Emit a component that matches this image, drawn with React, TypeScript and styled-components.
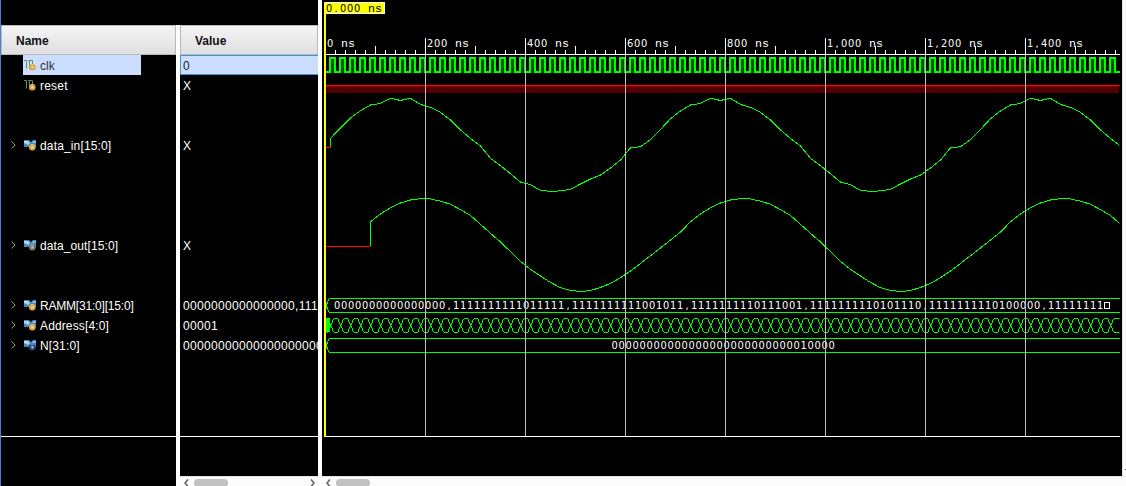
import React from 'react';
import styled, { createGlobalStyle } from 'styled-components';

const GlobalStyle = createGlobalStyle`
  * { box-sizing: border-box; }
  body { margin: 0; background: #000; overflow: hidden; }
`;

const Viewer = styled.div`
  display: flex;
  width: 1126px;
  height: 486px;
  overflow: hidden;
  background: #000;
  color: #fff;
  font-family: 'Liberation Sans', Arial, sans-serif;
  font-size: 12px;
`;

const Column = styled.section<{ $width: number; $edge?: boolean }>`
  display: flex;
  flex-direction: column;
  flex: none;
  width: ${p => p.$width}px;
  height: 486px;
  overflow: hidden;
  padding-top: 25px;
  border-left: ${p => (p.$edge ? '1px solid #4a80d8' : 'none')};
`;

const Splitter = styled.div<{ $top?: number }>`
  flex: none;
  width: 4px;
  margin-top: ${p => p.$top ?? 0}px;
  background: #fff;
`;

const Header = styled.div`
  flex: none;
  height: 30px;
  padding: 1px 14px 0;
  border: 1px solid #b9b9b9;
  background: linear-gradient(#f4f4f4, #dfdfe1);
  color: #111;
  font-weight: bold;
  line-height: 29px;
`;

const Rows = styled.div`
  flex: none;
  height: 382px;
  border-bottom: 1px solid #fff;
`;

const NameRow = styled.div<{ $height: number }>`
  display: flex;
  align-items: center;
  height: ${p => p.$height}px;
  padding-left: 8px;
`;

const Expander = styled.span`
  display: flex;
  width: 14px;
  svg { display: block; }
`;

const NameLabel = styled.span<{ $selected?: boolean; $spacing: number }>`
  display: flex;
  align-items: center;
  height: 20px;
  width: ${p => (p.$selected ? '118px' : 'auto')};
  padding: 0 0 0 1px;
  gap: 4px;
  white-space: nowrap;
  letter-spacing: ${p => p.$spacing}px;
  background: ${p => (p.$selected ? '#ccdeff' : 'transparent')};
  color: ${p => (p.$selected ? '#333' : '#fff')};
`;

const NameText = styled.span`
  padding-top: 2px;
`;

const ValueRow = styled.div<{ $height: number; $selected?: boolean }>`
  display: flex;
  align-items: center;
  height: ${p => p.$height}px;
  padding: 2px 0 0 ${p => (p.$selected ? 2 : 3)}px;
  overflow: hidden;
  white-space: nowrap;
  letter-spacing: 0.33px;
  border: ${p => (p.$selected ? '1px solid #3c96d2' : 'none')};
  border-right: none;
  background: ${p => (p.$selected ? '#ccdeff' : 'transparent')};
  color: ${p => (p.$selected ? '#222' : '#fff')};
`;

const Filler = styled.div`
  flex: 1;
`;

const ScrollBar = styled.div`
  display: flex;
  flex: none;
  height: 10px;
  padding: 2px 3px 0 4px;
  overflow: hidden;
  border-top: 1px solid #e3e3e3;
  background: #fbfbfb;
  svg { display: block; flex: none; }
`;

const Thumb = styled.div`
  flex: none;
  width: 34px;
  height: 8px;
  margin: 0 auto 0 5px;
  border-radius: 4px;
  background: #c1c1c1;
`;

const WaveArea = styled.section`
  display: flex;
  flex-direction: column;
  flex: none;
  width: 804px;
  height: 486px;
`;

const WaveBody = styled.div`
  display: flex;
  flex: none;
  height: 476px;
`;

const VerticalBar = styled.div`
  display: flex;
  align-items: flex-end;
  justify-content: flex-end;
  width: 4px;
  height: 476px;
  padding-bottom: 6px;
  border-left: 1px solid #e3e3e3;
  background: #fbfbfb;
`;

const ArrowTip = styled.i`
  width: 1px;
  height: 1px;
  background: #666;
`;

const Plot = styled.svg`
  display: block;
  flex: none;
  text { font-family: 'DejaVu Sans', sans-serif; font-size: 9.9px; fill: #fff; }
  text .unit { font-family: 'Liberation Mono', monospace; font-size: 11.67px; }
  .crisp { shape-rendering: crispEdges; fill: none; stroke-width: 1; }
`;

type Kind = 'wire' | 'gold' | 'gray' | 'navy';
interface Signal { name: string; value: string; height: number; kind: Kind; selected?: boolean; spacing?: number }

const signals: Signal[] = [
  { name: 'clk', value: '0', height: 20, kind: 'wire', selected: true },
  { name: 'reset', value: 'X', height: 20, kind: 'wire', spacing: 0.2 },
  { name: 'data_in[15:0]', value: 'X', height: 100, kind: 'gold', spacing: 0.15 },
  { name: 'data_out[15:0]', value: 'X', height: 100, kind: 'gray', spacing: 0.1 },
  { name: 'RAMM[31:0][15:0]', value: '0000000000000000,111', height: 20, kind: 'gold', spacing: -0.2 },
  { name: 'Address[4:0]', value: '00001', height: 20, kind: 'gold', spacing: 0.13 },
  { name: 'N[31:0]', value: '00000000000000000000', height: 20, kind: 'navy', spacing: 0.15 },
];

const badge = { wire: '#d9a43a', gold: '#dca63c', gray: '#777', navy: '#303c80' };

function SignalIcon({ kind }: { kind: Kind }) {
  return (
    <svg width="12" height="12" viewBox="0 0 12 12">
      {kind === 'wire' ? (
        <path d="M0 1.5H2.5V9.5M4 1.5H5.5V9.5H7M5.5 1.5H8.5V5" fill="none" stroke="#5d8f58" strokeWidth="1" />
      ) : (
        <>
          <path d="M0 1H5L7 3L9 1H12V8H8L6 7L5 8H0Z" fill="#4688bb" />
          <path d="M0 2H4L6 4L4 6L0 4Z" fill="#a8d9f5" />
          <path d="M9 2H12V4H8Z" fill="#83b8db" />
        </>
      )}
      <circle cx="8.3" cy="8.2" r="3.3" fill={badge[kind]} />
      <circle cx="8.5" cy="8.2" r="1.3" fill={kind === 'navy' ? '#b8bddd' : '#f2dfb4'} opacity={kind === 'gray' ? 0.6 : 0.9} />
      <path d="M6.3 6.2Q8 4.8 10 6" fill="none" stroke="#eee" strokeOpacity="0.45" />
    </svg>
  );
}

function Chevron({ left }: { left?: boolean }) {
  return (
    <svg width="5" height="8" viewBox="0 0 5 8">
      <path d={left ? 'M4 .5L1 4L4 7.5' : 'M1 .5L4 4L1 7.5'} fill="none" stroke="#666" strokeWidth="1.6" />
    </svg>
  );
}

function MonoText({ x, y, children, unit, fill }: { x: number; y: number; children: string; unit?: string; fill?: string }) {
  const all = children + (unit ? ' ' + unit : '');
  return (
    <text
      x={Array.from(all, (c, i) => x + i * 7 + (c === ',' || c === '.' ? 1.6 : 0)).join(' ')}
      y={y}
      style={fill ? { fill } : undefined}
    >
      {children}{unit && <tspan className="unit">{' ' + unit}</tspan>}
    </text>
  );
}

// One full period of each sampled signal, one sample every 10 px.
const inStart = [138, 127.5, 117.5, 110.3, 104.6];
const inPeriod = [103, 98, 100, 98, 104, 107, 112, 119.6, 129.6, 138, 145.6, 158, 165.3, 173.3, 181.6, 184.3, 190, 191, 190.5, 189, 183.6, 178.6, 174.6, 167.6, 159.6, 147.4, 146.3, 139.3, 129, 118.3, 110.6, 104.6];
const outPeriod = [221.3, 213.6, 207.3, 202.6, 199.6, 198.2, 198.5, 200.8, 203.8, 209.3, 215, 224, 233, 241.6, 251.3, 261, 269, 275.6, 282, 287.3, 290, 291.2, 290.2, 287, 283, 277.3, 270.6, 263, 255.4, 247.5, 239.6, 231.6];

const repeat = (period: number[], count: number) => Array.from({ length: count }, (_, i) => period[i % period.length]);
const trace = (x0: number, ys: number[]) => ys.map((y, i) => `${x0 + i * 10 + 0.5},${y + 0.4}`).join(' ');

const inTrace = trace(330, [...inStart, ...repeat(inPeriod, 75)]);
const outTrace = trace(370, repeat(outPeriod, 76));

const clock = 'M326 72' + Array.from({ length: 79 }, (_, i) => `H${330 + i * 10}V58H${335 + i * 10}V72`).join('') + 'H1120';
const crossing = (up: boolean) => {
  const ys = up ? [332.5, 331, 328.5, 325.5, 322.5, 320, 318.5] : [318.5, 320, 322.5, 325.5, 328.5, 331, 332.5];
  return Array.from({ length: 79 }, (_, i) => {
    const flip = i % 2 === 1;
    const c = 330.8 + i * 10;
    const y = flip ? [...ys].reverse() : ys;
    return [-3.4, -2.3, -1.5, 0, 1.5, 2.3, 3.4].map((d, k) => `${c + d},${y[k]}`).join(' ');
  }).join(' ') + ` 1120,${up ? 318.5 : 332.5}`;
};

const labels = ['0', '200', '400', '600', '800', '1,000', '1,200', '1,400'];
const ramm = '0000000000000000,1111111111011111,1111111111001011,1111111110111001,1111111110101110,1111111110100000,11111111';

function Waveforms() {
  return (
    <Plot width="800" height="476" viewBox="322 0 800 476">
      <defs>
        <clipPath id="area"><rect x="326" y="55" width="793.5" height="380" /></clipPath>
      </defs>
      <g shapeRendering="crispEdges">
        <rect x="326" y="54" width="794" height="1" fill="#fff" />
        {Array.from({ length: 79 }, (_, i) => i + 1).filter(i => i % 10).map(i => (
          <rect key={i} x={325 + i * 10} y={i % 5 ? 50 : 46} width="1" height={i % 5 ? 4 : 8} fill="#fff" />
        ))}
        {Array.from({ length: 79 }, (_, i) => (
          <rect key={i} x={331 + i * 10} y="59" width="3" height="14" fill="#005000" />
        ))}
        <path d={clock} fill="none" stroke="#0f0" strokeWidth="2" />
        <rect x="326" y="85" width="794" height="1" fill="#f00" />
        <rect x="326" y="86" width="793" height="1" fill="#900000" />
        <rect x="326" y="87" width="793" height="6" fill="#500000" />
      </g>
      <g className="crisp" clipPath="url(#area)">
        <path d="M326 147.5H331M326 246.5H371" stroke="#f00" />
        <path d="M330.5 147V138M370.5 246V221" stroke="#0f0" />
        <polyline points={inTrace} stroke="#0f0" />
        <polyline points={outTrace} stroke="#0f0" />
        <polyline points={crossing(false)} stroke="#0f0" />
        <polyline points={crossing(true)} stroke="#0f0" />
      </g>
      <rect x="326" y="318" width="4" height="14" fill="#0f0" />
      <g className="crisp" stroke="#0f0">
        <path d="M1120 298.5H329.5L327.5 301.5L326.5 305.5L327.5 309.5L329.5 312.5H1120" />
        <path d="M1120 338.5H329.5L327.5 341.5L326.5 345.5L327.5 349.5L329.5 352.5H1120" />
      </g>
      <MonoText x={334} y={309}>{ramm}</MonoText>
      <rect x="1104.5" y="302.5" width="5" height="6" fill="none" stroke="#fff" />
      <MonoText x={611.5} y={349}>00000000000000000000000000010000</MonoText>
      {labels.map((label, i) => <MonoText key={label} x={327 + i * 100} y={47} unit="ns">{label}</MonoText>)}
      {labels.slice(1).map((label, i) => (
        <g key={label} shapeRendering="crispEdges">
          <rect x={425 + i * 100} y="38" width="1" height="17" fill="#fff" />
          <rect x={425 + i * 100} y="55" width="1" height="381" fill="#c0c0c0" />
        </g>
      ))}
      <rect x="326" y="436" width="794" height="1" fill="#fff" />
      <rect x="324" y="2" width="2" height="435" fill="#ff0" />
      <rect x="325" y="2" width="60" height="12" fill="#fff" />
      <rect x="325" y="3" width="59" height="10" fill="#ff0" />
      <MonoText x={326} y={12} unit="ns" fill="#000">0.000</MonoText>
    </Plot>
  );
}

export default function App() {
  return (
    <>
      <GlobalStyle />
      <Viewer>
        <Column $width={176} $edge>
          <Header>Name</Header>
          <Rows>
            {signals.map(s => (
              <NameRow key={s.name} $height={s.height}>
                <Expander>
                  {s.kind !== 'wire' && (
                    <svg width="8" height="8" viewBox="0 0 8 8"><path d="M2.5 .5L6 4L2.5 7.5" fill="none" stroke="#999" /></svg>
                  )}
                </Expander>
                <NameLabel $selected={s.selected} $spacing={s.spacing ?? 0}>
                  <SignalIcon kind={s.kind} /><NameText>{s.name}</NameText>
                </NameLabel>
              </NameRow>
            ))}
          </Rows>
        </Column>
        <Splitter $top={25} />
        <Column $width={138}>
          <Header>Value</Header>
          <Rows>
            {signals.map(s => (
              <ValueRow key={s.name} $height={s.height} $selected={s.selected}>{s.value}</ValueRow>
            ))}
          </Rows>
          <Filler />
          <ScrollBar><Chevron left /><Thumb /><Chevron /></ScrollBar>
        </Column>
        <Splitter />
        <WaveArea>
          <WaveBody>
            <Waveforms />
            <VerticalBar><ArrowTip /></VerticalBar>
          </WaveBody>
          <ScrollBar><Chevron left /><Thumb /></ScrollBar>
        </WaveArea>
      </Viewer>
    </>
  );
}
